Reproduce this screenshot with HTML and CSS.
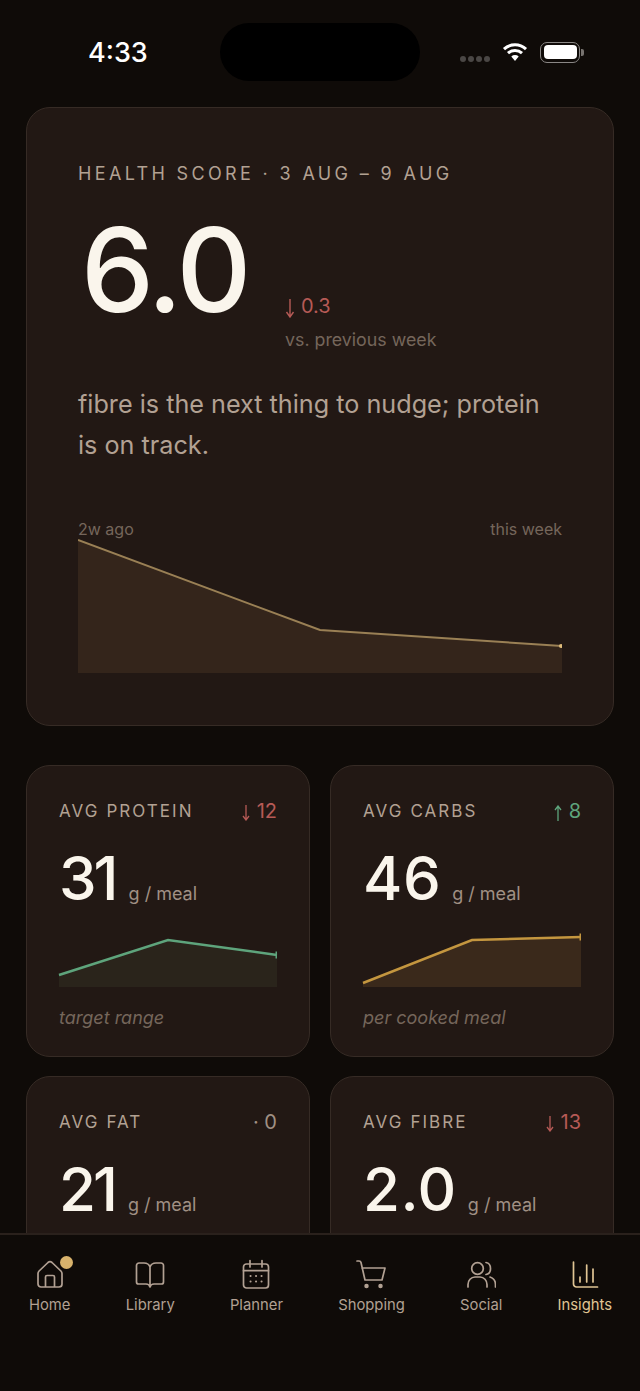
FILE: index.html
```html
<!DOCTYPE html>
<html lang="en">
<head>
    <meta charset="UTF-8">
    <meta name="viewport" content="width=device-width, initial-scale=1.0">
    <title>Insights</title>
    <link rel="stylesheet" href="styles.css">
</head>
<body>
    <div class="status-bar">
        <span class="clock">4:33</span>
        <div class="island"></div>
        <div class="status-icons">
            <span class="signal"><i></i><i></i><i></i><i></i></span>
            <svg class="wifi" width="26" height="20" viewBox="0 0 26 20">
                <path d="M2 7.2a16 16 0 0 1 22 0M6 11.2a10.4 10.4 0 0 1 14 0" fill="none" stroke="#fff" stroke-width="3"/>
                <path d="M9.3 14.4a5.4 5.4 0 0 1 7.4 0L13 19z" fill="#fff"/>
            </svg>
            <span class="battery"><span class="battery-fill"></span></span>
            <span class="battery-tip"></span>
        </div>
    </div>

    <main class="content">
        <section class="card hero">
            <div class="label">HEALTH SCORE · 3 AUG – 9 AUG</div>
            <div class="score-row">
                <div class="score">6.0</div>
                <div class="score-delta">
                    <div class="delta down big">
                        <svg class="arrow-big" width="10" height="19" viewBox="0 0 10 19" fill="none" stroke="currentColor" stroke-width="1.400"><path d="M5 0v18M1.500 13 5 18l3.500-5"/></svg>
                        0.3
                    </div>
                    <div class="versus">vs. previous week</div>
                </div>
            </div>
            <p class="summary">fibre is the next thing to nudge; protein is on track.</p>
            <div class="chart-labels"><span>2w ago</span><span>this week</span></div>
            <svg class="hero-chart" width="484" height="134" viewBox="0 0 484 134">
                <polygon points="0,1 242,91 484,107 484,134 0,134" fill="#34251b"/>
                <polyline points="0,1 242,91 484,107" fill="none" stroke="#9a8055" stroke-width="2"/>
                <circle cx="483" cy="107" r="2" fill="#e0bd7c"/>
            </svg>
        </section>

        <div class="metrics">
            <section class="card metric">
                <div class="metric-head">
                    <span class="metric-name">AVG PROTEIN</span>
                    <span class="delta down"><svg class="arrow" width="8" height="16" viewBox="0 0 8 16" fill="none" stroke="currentColor" stroke-width="1.300"><path d="M4 0v15M1 11 4 15l3-4"/></svg>12</span>
                </div>
                <div class="metric-value"><span class="num">31</span><span class="unit">g / meal</span></div>
                <svg class="spark" width="218" height="50" viewBox="0 0 218 50">
                    <polygon points="0,36 109,1 218,16 218,48 0,48" fill="#2a241b"/>
                    <polyline points="0,36 109,1 218,16" fill="none" stroke="#5ea47c" stroke-width="2.500"/>
                    <rect x="216.5" y="12.500" width="1.500" height="7" fill="#5ea47c"/>
                </svg>
                <div class="metric-note">target range</div>
            </section>
            <section class="card metric">
                <div class="metric-head">
                    <span class="metric-name">AVG CARBS</span>
                    <span class="delta up"><svg class="arrow" width="8" height="16" viewBox="0 0 8 16" fill="none" stroke="currentColor" stroke-width="1.300"><path d="M4 16V1M1 5l3-4 3 4"/></svg>8</span>
                </div>
                <div class="metric-value"><span class="num wide">46</span><span class="unit">g / meal</span></div>
                <svg class="spark" width="218" height="50" viewBox="0 0 218 50">
                    <polygon points="0,44 109,1 218,-2 218,48 0,48" fill="#3a291b"/>
                    <polyline points="0,44 109,1 218,-2" fill="none" stroke="#c4963f" stroke-width="2.500"/>
                    <rect x="216.5" y="-5.500" width="1.500" height="7" fill="#c4963f"/>
                </svg>
                <div class="metric-note">per cooked meal</div>
            </section>
            <section class="card metric">
                <div class="metric-head">
                    <span class="metric-name">AVG FAT</span>
                    <span class="delta flat">· 0</span>
                </div>
                <div class="metric-value"><span class="num">21</span><span class="unit">g / meal</span></div>
            </section>
            <section class="card metric">
                <div class="metric-head">
                    <span class="metric-name">AVG FIBRE</span>
                    <span class="delta down"><svg class="arrow" width="8" height="16" viewBox="0 0 8 16" fill="none" stroke="currentColor" stroke-width="1.300"><path d="M4 0v15M1 11 4 15l3-4"/></svg>13</span>
                </div>
                <div class="metric-value"><span class="num wide">2.0</span><span class="unit">g / meal</span></div>
            </section>
        </div>
    </main>

    <nav class="tabbar">
        <a class="tab">
            <span class="tab-icon">
                <svg width="30" height="30" viewBox="0 0 30 30" fill="none" stroke="currentColor" stroke-width="1.700" stroke-linejoin="round">
                    <path d="M3 14.500c0-1 .4-1.800 1.100-2.500L13 3.500a3 3 0 0 1 4 0l8.900 8.500c.7.7 1.100 1.500 1.100 2.500V25a3 3 0 0 1-3 3H6a3 3 0 0 1-3-3z"/>
                    <path d="M10.500 28V18a1.500 1.500 0 0 1 1.500-1.500h6a1.500 1.500 0 0 1 1.500 1.500v10"/>
                </svg>
                <span class="badge"></span>
            </span>
            Home
        </a>
        <a class="tab">
            <svg width="30" height="30" viewBox="0 0 30 30" fill="none" stroke="currentColor" stroke-width="1.700" stroke-linejoin="round">
                <path d="M15 8c-1-3-3-4-6-4H4a2.500 2.500 0 0 0-2.500 2.500V23a2 2 0 0 0 2 2H11c2 0 3.500 1 4 3 .5-2 2-3 4-3h7.500a2 2 0 0 0 2-2V6.500A2.500 2.500 0 0 0 26 4h-5c-3 0-5 1-6 4zM15 8v20"/>
            </svg>
            Library
        </a>
        <a class="tab">
            <svg width="30" height="30" viewBox="0 0 30 30" fill="none" stroke="currentColor" stroke-width="1.700" stroke-linecap="round">
                <rect x="2.500" y="5" width="25" height="24" rx="3"/>
                <path d="M2.500 11.700h25M9 1.500V8M21 1.500V8"/>
                <path d="M9.500 17h.1M15 17h.1M20.500 17h.1M9.500 22.500h.1M15 22.500h.1M20.500 22.500h.1" stroke-width="2"/>
            </svg>
            Planner
        </a>
        <a class="tab">
            <svg width="30" height="30" viewBox="0 0 30 30" fill="none" stroke="currentColor" stroke-width="1.700" stroke-linecap="round" stroke-linejoin="round">
                <path d="M1 2h2c1 0 1.800.6 2 1.500L9 21h17l3-12H6"/>
                <circle cx="10.500" cy="27" r="1.400" fill="currentColor"/>
                <circle cx="24.500" cy="27" r="1.400" fill="currentColor"/>
            </svg>
            Shopping
        </a>
        <a class="tab">
            <svg width="30" height="30" viewBox="0 0 30 30" fill="none" stroke="currentColor" stroke-width="1.700" stroke-linecap="round">
                <circle cx="11.500" cy="9.500" r="5.800"/>
                <path d="M2 28v-2.500c0-4 3-7.500 7-7.500h5c4 0 7 3.500 7 7.500V28"/>
                <path d="M20 3.500c3 .5 4.500 3 4.500 6s-1.500 5.500-4.500 6M24 18c3 1 5.500 4 5.500 7.500V28"/>
            </svg>
            Social
        </a>
        <a class="tab active">
            <svg width="30" height="30" viewBox="0 0 30 30" fill="none" stroke="currentColor" stroke-width="1.700" stroke-linecap="round">
                <path d="M3.500 3v22a3 3 0 0 0 3 3h21M10 23v-5M16.700 23V6M23 23V10"/>
            </svg>
            Insights
        </a>
    </nav>
</body>
</html>
```

FILE: styles.css
```css
/* General */
* {
    box-sizing: border-box;
}

body {
    margin: 0;
    height: 1391px;
    display: flex;
    flex-direction: column;
    overflow: hidden;
    background: #0f0b08;
    color: #faf5ec;
    font-family: 'Inter', 'Liberation Sans', sans-serif;
}

/* Status bar */
.status-bar {
    height: 107px;
    flex: none;
    display: flex;
    justify-content: space-between;
    align-items: flex-start;
    padding: 23px 56px 0 88px;
}

.clock {
    width: 132px;
    margin-top: 15px;
    font-size: 27px;
    line-height: 30px;
    font-weight: 500;
    color: #fff;
}

.island {
    width: 200px;
    height: 58px;
    border-radius: 29px;
    background: #000;
}

.status-icons {
    display: flex;
    align-items: center;
    margin-top: 18px;
    height: 22px;
    margin-left: auto;
}

.signal {
    display: flex;
    gap: 2px;
    margin-top: 13px;
    margin-right: 12px;
}

.signal i {
    width: 6px;
    height: 6px;
    border-radius: 50%;
    background: #4a4745;
}

.wifi {
    margin-right: 12px;
}

.battery {
    width: 40px;
    height: 21px;
    padding: 2.500px;
    border: 1.500px solid #8a8785;
    border-radius: 7px;
}

.battery-fill {
    display: block;
    height: 100%;
    border-radius: 4px;
    background: #fff;
}

.battery-tip {
    width: 3px;
    height: 7px;
    margin-left: 1px;
    border-radius: 0 2px 2px 0;
    background: #77736f;
}

/* Cards */
.content {
    flex: 1;
    min-height: 0;
    overflow: hidden;
    padding: 0 26px;
}

.card {
    background: #221814;
    border: 1px solid #362b25;
}

.hero {
    height: 619px;
    padding: 55px 51px 0;
    border-radius: 24px;
}

.label {
    font-size: 18px;
    line-height: 22px;
    letter-spacing: 3.350px;
    color: #b2a193;
}

.score-row {
    display: flex;
    margin-top: 26px;
}

.score {
    width: 207px;
    font-size: 116px;
    line-height: 118px;
    font-weight: 500;
    letter-spacing: -3px;
    padding-left: 3px;
}

.score-delta {
    padding-top: 82px;
}

.delta {
    font-size: 20px;
    line-height: 24px;
}

.delta.big {
    display: flex;
    align-items: center;
    gap: 6px;
}

.arrow {
    margin-right: 7px;
    vertical-align: -3px;
}

.arrow-big {
    margin-top: 6px;
}

.down {
    color: #b65a56;
}

.up {
    color: #5ea47c;
}

.flat {
    color: #a09084;
}

.versus {
    margin-top: 10px;
    font-size: 17.800px;
    line-height: 24px;
    color: #75665b;
}

.summary {
    max-width: 470px;
    margin: 32px 0 0;
    font-size: 25.200px;
    line-height: 41px;
    color: #b2a193;
}

.chart-labels {
    display: flex;
    justify-content: space-between;
    margin-top: 53px;
    font-size: 16px;
    line-height: 20px;
    color: #75665b;
}

.hero-chart {
    display: block;
}

/* Metric grid */
.metrics {
    display: grid;
    grid-template-columns: 284px 284px;
    column-gap: 20px;
    row-gap: 19px;
    margin-top: 39px;
}

.metric {
    height: 292px;
    padding: 33px 32px 0;
    border-radius: 24px;
}

.metric-head {
    display: flex;
    justify-content: space-between;
    line-height: 24px;
}

.metric-name {
    font-size: 17px;
    letter-spacing: 2.050px;
    color: #b2a193;
}

.metric-value {
    display: flex;
    align-items: baseline;
    margin-top: 20px;
    height: 70px;
}

.num {
    font-size: 60px;
    line-height: 70px;
    font-weight: 500;
    letter-spacing: -3px;
    margin-right: 13px;
}

.num.wide {
    letter-spacing: 0.500px;
    margin-right: 11px;
}

.unit {
    font-size: 18px;
    color: #a09084;
}

.spark {
    display: block;
    margin-top: 26px;
    overflow: visible;
}

.metric-note {
    margin-top: 17px;
    font-size: 18px;
    line-height: 24px;
    font-style: italic;
    color: #75665b;
}

/* Bottom tabs */
.tabbar {
    height: 158px;
    flex: none;
    display: flex;
    justify-content: space-between;
    padding: 24px 28px 0 29px;
    border-top: 2px solid #2a211c;
    background: #0f0b08;
}

.tab {
    display: flex;
    flex-direction: column;
    align-items: center;
    gap: 6px;
    font-size: 14.800px;
    line-height: 20px;
    color: #b2a193;
}

.tab.active {
    color: #e0c594;
}

.tab-icon {
    position: relative;
    display: block;
    height: 30px;
}

.badge {
    position: absolute;
    top: -3px;
    right: -8px;
    width: 13px;
    height: 13px;
    border-radius: 50%;
    background: #d9b36c;
}
```
